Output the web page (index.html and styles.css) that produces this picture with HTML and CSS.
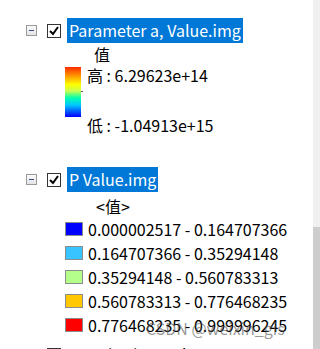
FILE: index.html
```html
<!DOCTYPE html>
<html lang="zh-cn">
<head>
    <meta charset="UTF-8">
    <meta name="viewport" content="width=device-width, initial-scale=1.0">
    <title>图层列表</title>
    <link rel="stylesheet" href="styles.css">
</head>
<body>
    <div class="window">
        <div class="tree">
            <div class="layer">
                <div class="row">
                    <span class="toggle"></span>
                    <span class="check">
                        <svg width="10" height="10" viewBox="0 0 10 10"><path d="M1 5 L4 8 L9 1" fill="none" stroke="#000" stroke-width="2"/></svg>
                    </span>
                    <span class="name selected">Parameter a, Value.img</span>
                </div>
                <div class="legend-title">值</div>
                <div class="ramp">
                    <div class="ramp-bar"><span class="tick"></span></div>
                    <div class="ramp-labels">
                        <span>高 : 6.29623e+14</span>
                        <span>低 : -1.04913e+15</span>
                    </div>
                </div>
            </div>

            <div class="layer">
                <div class="row">
                    <span class="toggle"></span>
                    <span class="check">
                        <svg width="10" height="10" viewBox="0 0 10 10"><path d="M1 5 L4 8 L9 1" fill="none" stroke="#000" stroke-width="2"/></svg>
                    </span>
                    <span class="name selected">P Value.img</span>
                </div>
                <div class="legend-title small">&lt;值&gt;</div>
                <ul class="classes">
                    <li><span class="swatch c1"></span>0.000002517 - 0.164707366</li>
                    <li><span class="swatch c2"></span>0.164707366 - 0.35294148</li>
                    <li><span class="swatch c3"></span>0.35294148 - 0.560783313</li>
                    <li><span class="swatch c4"></span>0.560783313 - 0.776468235</li>
                    <li><span class="swatch c5"></span>0.776468235 - 0.999996245</li>
                </ul>
            </div>

            <div class="layer next">
                <div class="row">
                    <span class="toggle"></span>
                    <span class="check"></span>
                    <span class="name">Standard Error.img</span>
                </div>
            </div>
        </div>
        <div class="scrollbar"><div class="thumb"></div></div>
        <div class="watermark">CSDN @weixin_gis</div>
    </div>
</body>
</html>
```

FILE: styles.css
```css
body {
    margin: 0;
    background: #fff;
    font-family: "Noto Sans CJK SC", "Noto Sans", sans-serif;
    font-size: 16px;
    color: #000;
}
.window {
    position: relative;
    display: flex;
    width: 320px;
    height: 349px;
    overflow: hidden;
}
.tree {
    flex: 1;
    padding-top: 18px;
}
.row {
    display: flex;
    align-items: center;
    height: 25px;
}
.toggle {
    width: 9px;
    height: 9px;
    margin-left: 26px;
    border: 1px solid #9a9a9a;
    background: linear-gradient(#fbfbfb, #e4e4e4);
    position: relative;
}
.toggle::after {
    content: "";
    position: absolute;
    left: 2px;
    top: 4px;
    width: 5px;
    height: 1px;
    background: #3b4a8c;
}
.check {
    display: flex;
    align-items: center;
    justify-content: center;
    width: 12px;
    height: 12px;
    margin-left: 10px;
    border: 1px solid #333;
    background: #fff;
}
.name {
    margin-left: 6px;
    height: 25px;
    line-height: 25px;
    padding: 0 2px;
    white-space: nowrap;
}
.selected {
    background: #0078d7;
    color: #fff;
}
.legend-title {
    margin-left: 94px;
    height: 22px;
    line-height: 22px;
}
.legend-title.small {
    margin-left: 96px;
    margin-top: 3px;
}
.ramp {
    display: flex;
    margin-left: 65px;
    margin-top: 2px;
    margin-bottom: 32px;
}
.ramp-bar {
    position: relative;
    width: 16px;
    height: 50px;
    background: linear-gradient(#ff2a00, #ff9a00 18%, #ffff00 35%, #c8ff50 48%, #00ffb0 62%, #00c8ff 76%, #0050ff 90%, #0000ff);
}
.tick {
    position: absolute;
    right: -2px;
    top: 24px;
    width: 2px;
    height: 1px;
    background: #555;
}
.ramp-labels {
    display: flex;
    flex-direction: column;
    justify-content: space-between;
    margin-left: 6px;
    margin-top: -2px;
    height: 70px;
    line-height: 20px;
}
.classes {
    list-style: none;
    margin: 0 0 0 65px;
    padding: 0;
}
.classes li {
    display: flex;
    align-items: center;
    height: 24px;
    white-space: nowrap;
}
.swatch {
    width: 16px;
    height: 12px;
    margin-right: 5px;
    border: 1px solid #8c8c8c;
}
.c1 { background: #0000ff; }
.c2 { background: #38c5ff; }
.c3 { background: #b4ff8c; }
.c4 { background: #ffc800; }
.c5 { background: #ff0000; }
.next {
    margin-top: 5px;
}
.scrollbar {
    width: 7px;
    background: #f0f0f0;
    display: flex;
    flex-direction: column;
    justify-content: flex-end;
}
.thumb {
    height: 122px;
    background: #cdcdcd;
}
.watermark {
    position: absolute;
    left: 146px;
    top: 316px;
    font-size: 16px;
    color: rgba(80, 80, 80, 0.6);
    white-space: nowrap;
}
```
